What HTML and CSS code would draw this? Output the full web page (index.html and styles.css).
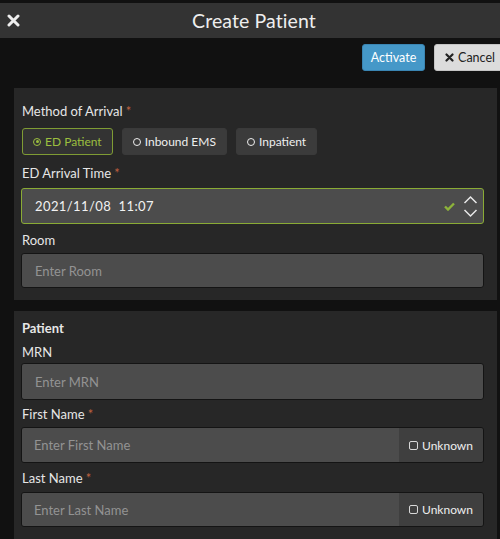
FILE: index.html
```html
<!DOCTYPE html>
<html>
<head>
<meta charset="utf-8">
<link rel="stylesheet" href="styles.css">
</head>
<body>
<div class="page">
  <header class="topbar">
    <span class="close-x">
      <svg width="13" height="13" viewBox="0 0 13 13"><path d="M2 2 L11 11 M11 2 L2 11" stroke="#eeeeee" stroke-width="3" stroke-linecap="round"/></svg>
    </span>
    <h1 class="title">Create Patient</h1>
  </header>

  <div class="actions">
    <button class="btn btn-primary">Activate</button>
    <button class="btn btn-cancel">
      <svg class="btn-icon" width="9" height="9" viewBox="0 0 9 9"><path d="M1.5 1.5 L7.5 7.5 M7.5 1.5 L1.5 7.5" stroke="#222" stroke-width="2.2" stroke-linecap="round"/></svg>
      Cancel
    </button>
  </div>

  <section class="panel panel-arrival">
    <div class="field">
      <label class="label">Method of Arrival <span class="req">*</span></label>
      <div class="radios">
        <button class="radio active"><span class="dot on"></span>ED Patient</button>
        <button class="radio"><span class="dot"></span>Inbound EMS</button>
        <button class="radio"><span class="dot"></span>Inpatient</button>
      </div>
    </div>
    <div class="field field-date">
      <label class="label">ED Arrival Time <span class="req">*</span></label>
      <div class="input input-valid">
        <span class="value">2021/11/08  11:07</span>
        <svg class="check" width="11" height="9" viewBox="0 0 11 9"><path d="M1 4.5 L4 7.5 L10 1.5" stroke="#8db33a" stroke-width="2.4" fill="none"/></svg>
        <svg class="spin" width="15" height="23" viewBox="0 0 15 23"><path d="M1.5 8 L7.5 2 L13.5 8 M1.5 15 L7.5 21 L13.5 15" stroke="#e8e8e8" stroke-width="1.5" fill="none"/></svg>
      </div>
    </div>
    <div class="field field-room">
      <label class="label">Room</label>
      <div class="input"><span class="placeholder">Enter Room</span></div>
    </div>
  </section>

  <section class="panel panel-patient">
    <div class="section-title">Patient</div>
    <div class="field field-mrn">
      <label class="label">MRN</label>
      <div class="input input-tall"><span class="placeholder">Enter MRN</span></div>
    </div>
    <div class="field field-first">
      <label class="label">First Name <span class="req">*</span></label>
      <div class="input-group">
        <div class="input grow"><span class="placeholder">Enter First Name</span></div>
        <div class="addon"><span class="box"></span>Unknown</div>
      </div>
    </div>
    <div class="field field-last">
      <label class="label">Last Name <span class="req">*</span></label>
      <div class="input-group">
        <div class="input grow"><span class="placeholder">Enter Last Name</span></div>
        <div class="addon"><span class="box"></span>Unknown</div>
      </div>
    </div>
  </section>
</div>
</body>
</html>
```

FILE: styles.css
```css
html, body {
  margin: 0;
  padding: 0;
  background: #111111;
  overflow: hidden;
  height: 539px;
}
body {
  font-family: Lato, "Noto Sans", sans-serif;
  font-size: 13px;
  color: #e6e6e6;
}
.page {
  padding-top: 3px;
}
.topbar {
  height: 35px;
  background: #333333;
  display: flex;
  align-items: center;
  position: relative;
}
.close-x {
  position: absolute;
  left: 7px;
  top: 11px;
  width: 13px;
  height: 13px;
  display: flex;
}
.title {
  flex: 1;
  margin: 0;
  text-align: center;
  font-size: 19.5px;
  font-weight: 400;
  color: #eeeeee;
  padding-left: 8px;
  letter-spacing: 0.1px;
}
.actions {
  display: flex;
  justify-content: flex-end;
  gap: 9px;
  padding: 6px 0 17px;
  margin-right: -7px;
}
.btn {
  height: 27px;
  border-radius: 3px;
  font-family: inherit;
  font-size: 12.5px;
  border: 1px solid transparent;
  display: flex;
  align-items: center;
  gap: 4px;
}
.btn-icon {
  flex-shrink: 0;
}
.btn-primary {
  background: #4598c8;
  border-color: #3a85b2;
  color: #ffffff;
  padding: 0 10px;
  width: 63px;
  justify-content: center;
}
.btn-cancel {
  background: #dcdcdc;
  border-color: #c4c4c4;
  color: #222222;
  padding: 0 11px 0 10px;
}
.panel {
  background: #272727;
  margin: 0 3px 0 14px;
  padding: 0 13px 0 7px;
}
.panel-arrival {
  padding-top: 14px;
  padding-bottom: 12px;
  margin-bottom: 11px;
}
.panel-patient {
  padding-top: 8px;
  height: 220px;
}
.field {
  display: flex;
  flex-direction: column;
}
.label {
  line-height: 18px;
  margin-left: 1px;
  color: #e6e6e6;
  margin-bottom: 4px;
}
.req {
  color: #c0603f;
}
.radios {
  display: flex;
  gap: 9px;
  margin-left: 1px;
  margin-top: 4px;
}
.radio {
  height: 27px;
  border-radius: 3px;
  border: 1px solid #3a3a3a;
  background: #3b3b3b;
  color: #eeeeee;
  font-family: inherit;
  font-size: 12px;
  display: flex;
  align-items: center;
  gap: 4px;
  padding: 0 10px 0 10px;
}
.radio.active {
  background: #333333;
  border-color: #7f9c34;
  color: #9cbf3f;
}
.dot {
  width: 6px;
  height: 6px;
  border: 1.5px solid #eeeeee;
  border-radius: 50%;
  position: relative;
  box-sizing: content-box;
  flex-shrink: 0;
}
.dot.on {
  border-color: #9cbf3f;
}
.dot.on::after {
  content: "";
  position: absolute;
  left: 1.5px;
  top: 1.5px;
  width: 3px;
  height: 3px;
  border-radius: 50%;
  background: #9cbf3f;
}
.field-date {
  margin-top: 9px;
}
.field-date .label {
  margin-bottom: 6px;
}
.field-room {
  margin-top: 7px;
}
.input {
  height: 35px;
  box-sizing: border-box;
  background: #4c4c4c;
  border: 1px solid #141414;
  border-radius: 3px;
  display: flex;
  align-items: center;
  padding-left: 13px;
}
.input-valid {
  height: 36px;
  border-color: #8aab35;
  padding-right: 5px;
}
.value {
  white-space: pre;
  color: #f2f2f2;
  flex: 1;
  letter-spacing: 0.4px;
}
.check {
  margin-right: 8px;
}
.placeholder {
  color: #939393;
}
.section-title {
  font-weight: 700;
  line-height: 18px;
  margin-left: 1px;
  margin-bottom: 6px;
}
.field-mrn .label {
  margin-bottom: 2px;
}
.input-tall {
  height: 37px;
}
.field-first {
  margin-top: 5px;
}
.field-last {
  margin-top: 6px;
}
.field-last .label {
  margin-bottom: 5px;
}
.input-group {
  display: flex;
  height: 36px;
  border: 1px solid #141414;
  border-radius: 3px;
  box-sizing: border-box;
  overflow: hidden;
}
.field-last .input-group {
  height: 35px;
}
.input-group .input {
  border: none;
  border-radius: 0;
  height: auto;
  flex: 1;
  padding-left: 12px;
}
.addon {
  width: 84px;
  background: #3f3f3f;
  display: flex;
  align-items: center;
  gap: 4px;
  padding-left: 10px;
  box-sizing: border-box;
  color: #eeeeee;
  font-size: 12px;
}
.box {
  width: 7px;
  height: 7px;
  border: 1.3px solid #d8d8d8;
  border-radius: 2px;
  flex-shrink: 0;
}
```
